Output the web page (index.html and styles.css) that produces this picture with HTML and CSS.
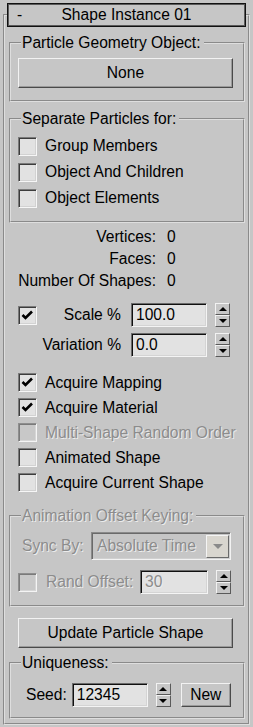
FILE: index.html
```html
<!DOCTYPE html>
<html>
<head>
    <title>Shape Instance 01</title>
    <link rel="stylesheet" href="styles.css">
</head>
<body>
    <div class="rollout">
        <div class="rollout-title">
            <span class="collapse">-</span>
            <span class="title-text">Shape Instance 01</span>
        </div>

        <fieldset class="group geom">
            <legend>Particle Geometry Object:</legend>
            <div class="btn">None</div>
        </fieldset>

        <fieldset class="group separate">
            <legend>Separate Particles for:</legend>
            <div class="check"><span class="box"></span>Group Members</div>
            <div class="check"><span class="box"></span>Object And Children</div>
            <div class="check"><span class="box"></span>Object Elements</div>
        </fieldset>

        <div class="stats">
            <div class="stat"><span class="stat-label">Vertices:</span><span class="stat-value">0</span></div>
            <div class="stat"><span class="stat-label">Faces:</span><span class="stat-value">0</span></div>
            <div class="stat"><span class="stat-label">Number Of Shapes:</span><span class="stat-value">0</span></div>
        </div>

        <div class="spin-row scale-row">
            <div class="spin-lead">
                <span class="box"><svg width="17" height="17" viewBox="0 0 17 17"><polyline points="3.5,8 6.5,11 13,4.5" fill="none" stroke="#000" stroke-width="2.6"/></svg></span>
                <span class="spin-label">Scale %</span>
            </div>
            <div class="field">100.0</div>
            <div class="spinner"><span class="spin-up"></span><span class="spin-down"></span></div>
        </div>
        <div class="spin-row variation-row">
            <div class="spin-lead">
                <span class="spin-label">Variation %</span>
            </div>
            <div class="field">0.0</div>
            <div class="spinner"><span class="spin-up"></span><span class="spin-down"></span></div>
        </div>

        <div class="options">
            <div class="check"><span class="box"><svg width="17" height="17" viewBox="0 0 17 17"><polyline points="3.5,8 6.5,11 13,4.5" fill="none" stroke="#000" stroke-width="2.6"/></svg></span>Acquire Mapping</div>
            <div class="check"><span class="box"><svg width="17" height="17" viewBox="0 0 17 17"><polyline points="3.5,8 6.5,11 13,4.5" fill="none" stroke="#000" stroke-width="2.6"/></svg></span>Acquire Material</div>
            <div class="check disabled"><span class="box"></span>Multi-Shape Random Order</div>
            <div class="check"><span class="box"></span>Animated Shape</div>
            <div class="check"><span class="box"></span>Acquire Current Shape</div>
        </div>

        <fieldset class="group offset disabled">
            <legend>Animation Offset Keying:</legend>
            <div class="sync-row">
                <span class="sync-label">Sync By:</span>
                <div class="dropdown">
                    <span class="dropdown-text">Absolute Time</span>
                    <span class="dropdown-btn"></span>
                </div>
            </div>
            <div class="rand-row">
                <span class="box"></span>
                <span class="rand-label">Rand Offset:</span>
                <div class="field rand-field">30</div>
                <div class="spinner"><span class="spin-up"></span><span class="spin-down"></span></div>
            </div>
        </fieldset>

        <div class="btn btn-update">Update Particle Shape</div>

        <fieldset class="group unique">
            <legend>Uniqueness:</legend>
            <div class="seed-row">
                <span class="seed-label">Seed:</span>
                <div class="field seed-field">12345</div>
                <div class="spinner"><span class="spin-up"></span><span class="spin-down"></span></div>
                <div class="btn btn-new">New</div>
            </div>
        </fieldset>
    </div>
</body>
</html>
```

FILE: styles.css
```css
body {
    margin: 0;
    background: #c6c6c6;
    font-family: "Liberation Sans", Arial, sans-serif;
    font-size: 15.6px;
    color: #000;
}
.rollout {
    margin: 14px 3px 2px 3px;
    padding: 0 3px 4px 4px;
    border: 2px groove #dedede;
}
.rollout-title {
    display: flex;
    align-items: center;
    box-sizing: border-box;
    height: 24px;
    margin: -13px -1px 0 -2px;
    border: 1px solid #111;
    box-shadow: inset 1px 1px 0 #5a5a5a, inset -1px -1px 0 #5a5a5a;
    background: #c6c6c6;
}
.collapse {
    width: 22px;
    padding-left: 9px;
    box-sizing: border-box;
}
.title-text {
    flex: 1;
    text-align: center;
    margin-right: 22px;
}

/* group boxes */
.group {
    margin: 0;
    padding: 0 10px 0 7px;
    border: 2px groove #dedede;
    min-width: 0;
}
.group legend {
    margin-left: 3px;
    padding: 0 3px 0 1px;
    line-height: 18px;
}
.geom {
    margin-top: 7px;
    padding-top: 6px;
    padding-bottom: 12px;
}
.separate {
    margin-top: 8px;
    padding-top: 5px;
    padding-bottom: 10px;
}
.offset {
    margin-top: 12px;
    padding-top: 7px;
    padding-bottom: 11px;
}
.unique {
    margin-top: 6px;
    padding-top: 11px;
    padding-bottom: 10px;
}

/* buttons */
.btn {
    display: flex;
    align-items: center;
    justify-content: center;
    box-sizing: border-box;
    height: 30px;
    border: 1px solid;
    border-color: #f2f2f2 #4a4a4a #4a4a4a #f2f2f2;
    box-shadow: inset -1px -1px 0 #9a9a9a;
}
.btn-update {
    margin: 11px 12px 0 9px;
}
.btn-new {
    width: 50px;
    height: 24px;
    margin-left: 10px;
}

/* checkboxes */
.check {
    display: flex;
    align-items: center;
    height: 26px;
}
.box {
    flex: none;
    box-sizing: border-box;
    width: 19px;
    height: 19px;
    border: 1px solid;
    border-color: #7a7a7a #f6f6f6 #f6f6f6 #7a7a7a;
    box-shadow: inset 1px 1px 0 #3c3c3c, inset -1px -1px 0 #d2d2d2;
    background: #e2e2e2;
}
.box svg {
    display: block;
}
.check .box {
    margin-right: 8px;
}
.options {
    margin-top: 13px;
    padding-left: 9px;
}
.options .check {
    height: 25px;
}
.disabled,
.disabled legend {
    color: #8c8c8c;
    text-shadow: 1px 1px 0 #ececec;
}
.disabled .box {
    background: #c8c8c8;
    border-color: #8e8e8e #f4f4f4 #f4f4f4 #8e8e8e;
    box-shadow: inset 1px 1px 0 #7a7a7a, inset -1px -1px 0 #d6d6d6;
}

/* stats */
.stats {
    margin-top: 3px;
}
.stat {
    display: flex;
    align-items: center;
    height: 22px;
}
.stat-label {
    width: 147px;
    text-align: right;
}
.stat-value {
    margin-left: 11px;
}

/* spinner rows */
.spin-row {
    display: flex;
    align-items: center;
    height: 24px;
}
.scale-row {
    margin-top: 11px;
}
.variation-row {
    margin-top: 6px;
}
.spin-lead {
    display: flex;
    align-items: center;
    width: 112px;
}
.spin-lead .box {
    margin-left: 9px;
}
.spin-label {
    margin-left: auto;
}
.field {
    display: flex;
    align-items: center;
    box-sizing: border-box;
    width: 76px;
    height: 24px;
    padding-left: 4px;
    border: 1px solid;
    border-color: #6a6a6a #f4f4f4 #f4f4f4 #6a6a6a;
    box-shadow: inset 1px 1px 0 #101010, inset -1px -1px 0 #d4d4d4;
    background: #e2e2e2;
}
.spin-row .field {
    margin-left: 10px;
}
.spinner {
    flex: none;
    display: flex;
    flex-direction: column;
    width: 15px;
    height: 24px;
    margin-left: 8px;
}
.spinner span {
    flex: 1;
    display: flex;
    align-items: center;
    justify-content: center;
    border: 1px solid;
    border-color: #f2f2f2 #5a5a5a #5a5a5a #f2f2f2;
}
.spin-up::before {
    content: "";
    border-left: 4px solid transparent;
    border-right: 4px solid transparent;
    border-bottom: 4px solid #000;
}
.spin-down::before {
    content: "";
    border-left: 4px solid transparent;
    border-right: 4px solid transparent;
    border-top: 4px solid #000;
}

/* animation offset */
.sync-row {
    display: flex;
    align-items: center;
    height: 28px;
}
.sync-label {
    margin-left: 4px;
}
.dropdown {
    display: flex;
    align-items: center;
    box-sizing: border-box;
    width: 140px;
    height: 28px;
    margin: 0 2px 0 auto;
    padding: 0 1px 0 5px;
    border: 1px solid;
    border-color: #8a8a8a #f2f2f2 #f2f2f2 #8a8a8a;
    box-shadow: inset 1px 1px 0 #6a6a6a, inset -1px -1px 0 #d0d0d0;
}
.dropdown-text {
    flex: 1;
}
.dropdown-btn {
    display: flex;
    align-items: center;
    justify-content: center;
    box-sizing: border-box;
    width: 23px;
    height: 23px;
    border: 1px solid;
    border-color: #f4f4f4 #6a6a6a #6a6a6a #f4f4f4;
    background: #d9d6cf;
}
.dropdown-btn::before {
    content: "";
    border-left: 5px solid transparent;
    border-right: 5px solid transparent;
    border-top: 5px solid #8a8a8a;
}
.rand-row {
    display: flex;
    align-items: center;
    height: 24px;
    margin-top: 10px;
    padding-right: 2px;
}
.rand-label {
    margin-left: 9px;
}
.rand-field {
    width: 68px;
    margin-left: auto;
}
.rand-row .spinner span::before {
    border-top-color: #000;
    border-bottom-color: #000;
}

/* uniqueness */
.seed-row {
    display: flex;
    align-items: center;
    height: 24px;
}
.seed-label {
    margin-left: 8px;
}
.seed-field {
    margin-left: 5px;
}
```
